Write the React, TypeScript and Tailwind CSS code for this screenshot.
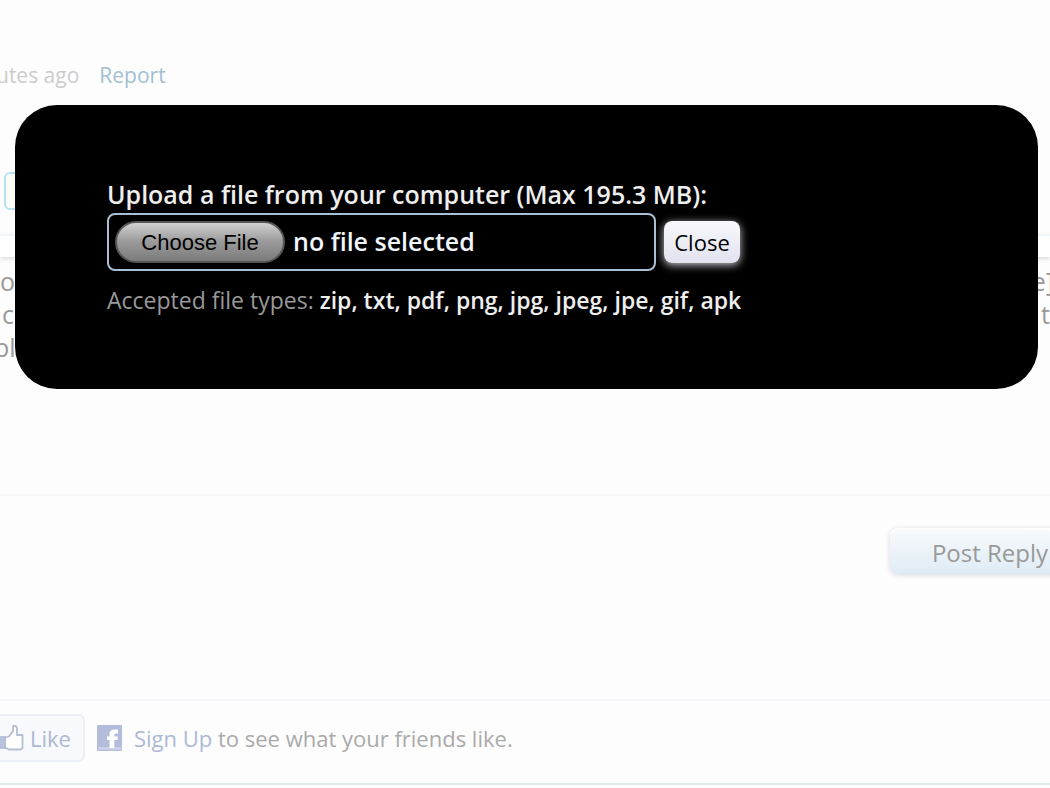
import { useRef, useState } from 'react';

const ACCEPTED_TYPES = ['zip', 'txt', 'pdf', 'png', 'jpg', 'jpeg', 'jpe', 'gif', 'apk'];

// ── Icons ────────────────────────────────────────────────────────────────────

function ThumbIcon() {
  return (
    <svg viewBox="0 0 24 26" className="h-[26px] w-6 shrink-0" aria-hidden="true">
      <rect x="0" y="11" width="6" height="13" fill="#b9c3de" />
      <path
        d="M5 12.500L9 11.500L13 6V2Q13 .8 14.500.8Q17 .8 17 3.500V10H22.500V23L20.500 24.500H9L5 22.500z"
        fill="#fff"
        stroke="#b3bdd2"
        strokeWidth="1.8"
        strokeLinejoin="round"
      />
    </svg>
  );
}

function FacebookIcon() {
  return (
    <svg viewBox="0 0 25 26" className="h-[26px] w-[25px] shrink-0" aria-hidden="true">
      <rect width="25" height="26" rx="1" fill="#b3bcdb" />
      <rect x="1" y="22" width="23" height="3" fill="#c9d0e6" />
      <path
        d="M12.500 23v-8H10v-3.500h2.500V9.500C12.500 6 14.500 4.500 17.500 4.500H21v4h-2c-1.200 0-1.700.5-1.700 1.500v1.500H21l-.5 3.500h-3.200v8z"
        fill="#fff"
      />
    </svg>
  );
}

// ── Upload dialog ────────────────────────────────────────────────────────────

function UploadDialog({ onClose }: { onClose: () => void }) {
  const inputRef = useRef<HTMLInputElement>(null);
  const [fileName, setFileName] = useState('');

  return (
    <div
      role="dialog"
      aria-labelledby="upload-label"
      className="absolute top-[105px] right-3 left-[15px] rounded-[42px] bg-black px-[92px] pt-[72px] pb-[70px] text-[#eee]"
    >
      <label id="upload-label" htmlFor="upload" className="block pb-0.5 text-[25px] leading-[34px] font-semibold">
        Upload a file from your computer (Max 195.3 MB):
      </label>
      <div className="flex items-center gap-2">
        <div className="flex h-[58px] w-full max-w-[549px] items-center gap-2 rounded-lg border-2 border-[#a9bfd2] px-1.5">
          <input
            ref={inputRef}
            id="upload"
            type="file"
            className="hidden"
            accept={ACCEPTED_TYPES.map((t) => `.${t}`).join(',')}
            onChange={(e) => setFileName(e.target.files?.[0]?.name ?? '')}
          />
          <button
            type="button"
            onClick={() => inputRef.current?.click()}
            className="h-[42px] w-[170px] shrink-0 rounded-full border-2 border-[#555] bg-linear-to-b from-[#d2d2d2] via-[#999] to-[#7c7c7c] font-['Liberation_Sans',sans-serif] text-[22px] text-black"
          >
            Choose File
          </button>
          <span className="truncate text-[25px] font-semibold text-[#f0f5fc]">{fileName || 'no file selected'}</span>
        </div>
        <button
          type="button"
          onClick={onClose}
          className="h-[42px] w-[76px] shrink-0 rounded-lg bg-linear-to-b from-[#f8f8fc] to-[#e2e2ef] text-[22px] text-black shadow-[0_2px_8px_#c8c8d0]"
        >
          Close
        </button>
      </div>
      <p className="mt-3 pb-0.5 text-[23px] leading-[34px] text-[#999]">
        Accepted file types: <span className="font-semibold text-[#eee]">{ACCEPTED_TYPES.join(', ')}</span>
      </p>
    </div>
  );
}

// ── Page ─────────────────────────────────────────────────────────────────────

export default function App() {
  const [open, setOpen] = useState(true);

  return (
    <div className="relative min-h-screen overflow-hidden bg-[#fdfdfd] font-['Trebuchet_MS','Open_Sans',sans-serif] whitespace-nowrap">
      <div className="flex gap-5 pt-[59px] text-[21px] leading-8 text-[#ccc]">
        <span className="-ml-1">utes ago</span>
        <a href="#report" className="text-[#a3bed0]">Report</a>
      </div>

      <div className="mt-[81px] ml-1 h-[38px] w-40 rounded-md border-2 border-[#b5e2f2] bg-[#fdfdf8]" />
      <div className="mt-6 h-[23px] border-t-2 border-[#f0f5fa] bg-white shadow-[0_2px_4px_#ddd]" />

      <div className="mt-2 text-[25px] leading-[33px] text-[#999]">
        <p className="flex justify-between"><span>o</span><span className="-mr-1">e]</span></p>
        <p className="flex justify-between"><span className="ml-0.5">c</span><span>t</span></p>
        <p className="-ml-1.5">pl</p>
      </div>

      <div className="mt-[130px] flex justify-end border-t-2 border-[#f5f5f5] pt-8">
        <button
          type="button"
          className="-mr-10 h-[46px] w-[200px] rounded-lg border-t-2 border-white bg-linear-to-b from-[#f8fafc] to-[#deebf5] pt-0.5 text-[24px] text-[#999] shadow-[0_1px_5px_#d5d5df]"
        >
          Post Reply
        </button>
      </div>

      <div className="mt-[125px] flex h-[86px] items-center border-y-2 border-t-[#f3f5f9] border-b-[#dfe8ec] pb-2 text-[22px] text-[#aaa]">
        <button
          type="button"
          className="-ml-2 flex h-12 items-center gap-1.5 rounded-md border-2 border-[#eceff6] bg-[#f8f9fc] pr-3 pl-1.5 text-[#adb8d2]"
        >
          <ThumbIcon />
          Like
        </button>
        <span className="mx-3">
          <FacebookIcon />
        </span>
        <p>
          <a href="#signup" className="text-[#adb8d6]">Sign Up</a> to see what your friends like.
        </p>
      </div>

      {open && <UploadDialog onClose={() => setOpen(false)} />}
    </div>
  );
}
